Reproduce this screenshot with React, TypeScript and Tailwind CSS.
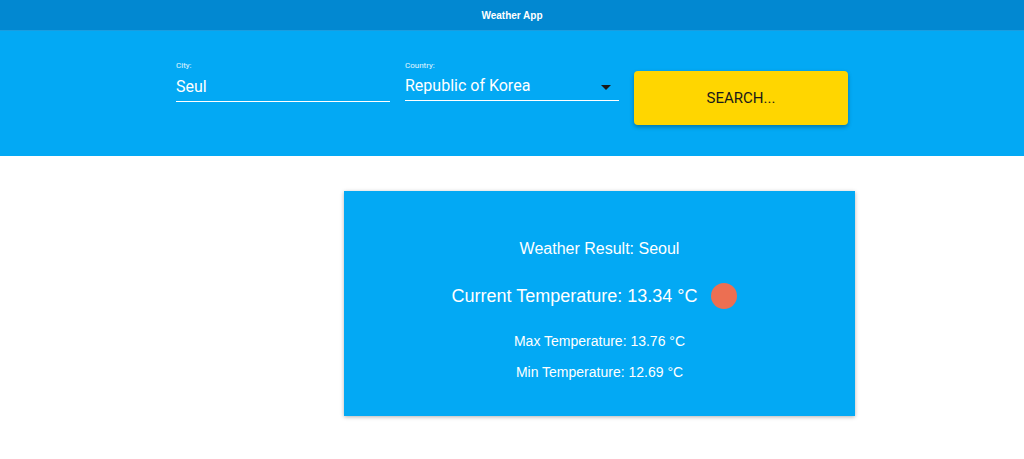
export default function App() {
  return (
    <div className="min-h-[459px] bg-white font-['Roboto',sans-serif]">
      {/* Top bar */}
      <div className="flex h-[31px] items-center justify-center bg-[#0288d1] border-b border-[#1a9de0]">
        <span className="font-['Liberation_Sans',sans-serif] text-[10px] font-bold text-white">Weather App</span>
      </div>

      {/* Search form */}
      <div className="flex h-[125px] justify-center bg-[#03a9f4] pt-[30px]">
        <div className="flex gap-[15px]">
          <div className="flex w-[214px] flex-col">
            <label className="text-[8px] leading-[10px] text-white/90">City:</label>
            <div className="mt-[6px] border-b border-white pb-[4px] text-[16px] leading-[20px] text-white">Seul</div>
          </div>
          <div className="flex w-[214px] flex-col">
            <label className="text-[8px] leading-[10px] text-white/90">Country:</label>
            <div className="mt-[5px] flex items-center justify-between border-b border-white pb-[4px] text-[16px] leading-[20px] text-white">
              <span>Republic of Korea</span>
              <svg width="10" height="5" viewBox="0 0 10 5" className="mr-[8px] mt-[2px]">
                <path d="M0 0h10L5 5z" fill="#1a1a1a" />
              </svg>
            </div>
          </div>
          <button className="mt-[10px] h-[54px] w-[214px] rounded-[4px] bg-[#ffd600] text-[15px] text-[#1a1a1a] shadow-[0_2px_4px_rgba(0,0,0,0.3)]">
            SEARCH...
          </button>
        </div>
      </div>

      {/* Result card */}
      <div className="pt-[35px]">
        <div className="ml-[344px] flex h-[225px] w-[511px] flex-col items-center bg-[#03a9f4] pt-[48px] font-['Liberation_Sans',sans-serif] text-white shadow-[0_1px_4px_rgba(0,0,0,0.3)]">
          <div className="text-[16px] leading-[20px]">Weather Result: Seoul</div>
          <div className="mr-[11px] mt-[24px] flex items-center gap-[13px]">
            <span className="text-[18px] leading-[24px]">Current Temperature: 13.34 °C</span>
            <span className="h-[26px] w-[26px] rounded-full bg-[#ec6f52]" />
          </div>
          <div className="mt-[23px] text-[14px] leading-[18px]">Max Temperature: 13.76 °C</div>
          <div className="mt-[13px] text-[14px] leading-[18px]">Min Temperature: 12.69 °C</div>
        </div>
      </div>
    </div>
  )
}
